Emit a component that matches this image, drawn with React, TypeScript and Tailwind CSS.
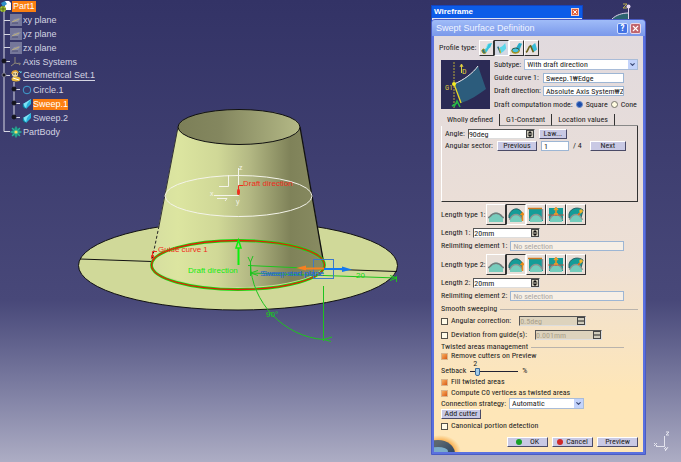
import { useState } from 'react';
import type { ReactNode } from 'react';
import { ChevronDown, X } from 'lucide-react';

const bevel =
  'border border-t-white border-l-white border-r-[#4a4a66] border-b-[#4a4a66]';

/* ---------- specification tree ---------- */

const PlaneIcon = () => (
  <svg viewBox="0 0 12 12" className="w-3 h-3">
    <rect width="12" height="12" fill="#75779a" />
    <path d="M1 9 L4 5 L11 4 L8 8 Z" fill="#8d8fa6" />
    <path d="M2 8 L9 5" stroke="#b9ab7c" />
    <path d="M2 9 L8 9" stroke="#4c4f74" />
  </svg>
);

const AxisIcon = () => (
  <svg viewBox="0 0 12 12" className="w-3 h-3" fill="none">
    <path d="M5 1 V7 L1 10 M5 7 L10 8 M9 6.500 L10.500 8 L9 9" stroke="#8f8878" />
  </svg>
);

const GeoSetIcon = () => (
  <svg viewBox="0 0 12 12" className="w-3 h-3">
    <circle cx="5" cy="4" r="3" fill="#f1d9a0" />
    <path d="M2 4 C2 0 8 0 8 3" fill="none" stroke="#e0a030" strokeWidth="1.500" />
    <ellipse cx="6" cy="9" rx="4.500" ry="2.500" fill="#e8b83c" />
    <path d="M3 8 L9 10" stroke="#fff" />
    <path d="M9 1 L11 3 M11 1 V3" stroke="#58c8d8" />
    <circle cx="4" cy="4" r="0.700" fill="#222" />
    <circle cx="6.500" cy="4" r="0.700" fill="#222" />
  </svg>
);

const CircleIcon = () => (
  <svg viewBox="0 0 10 10" className="w-[10px] h-[10px]">
    <circle cx="5" cy="5" r="3.800" fill="none" stroke="#3fa0d0" />
  </svg>
);

const SweepIcon = () => (
  <svg viewBox="0 0 10 10" className="w-[10px] h-[10px]">
    <path d="M1 5 L6 2 L9 0 L9 5 L4 10 L1 8 Z" fill="#28b4dc" />
    <path d="M1 5 L6 2 L9 0 L5 5 L4 9" fill="#7fe4f4" />
    <path d="M1 5 V8 L4 10" fill="none" stroke="#10607c" />
  </svg>
);

const BodyIcon = () => (
  <svg viewBox="0 0 12 12" className="w-3 h-3">
    <circle cx="6" cy="6" r="4.500" fill="#1a7c70" />
    <path
      d="M6 0.500 V11.500 M0.500 6 H11.500 M2 2 L10 10 M10 2 L2 10"
      stroke="#2cb09c"
      strokeWidth="1.300"
    />
    <circle cx="6" cy="6" r="1.600" fill="#f0e060" />
  </svg>
);

const PartIcon = () => (
  <svg viewBox="0 0 12 12" className="w-3 h-3">
    <path d="M5 0 H9 L11 2 V9 H5 Z" fill="#fff" />
    <path d="M1 2 L5 0 L7 3 L3 6 Z" fill="#2f90c8" />
    <circle cx="3" cy="8" r="3" fill="#a8c838" />
    <path d="M3 5 V11 M0 8 H6" stroke="#556b10" />
  </svg>
);

interface TreeNode {
  label: string;
  icon: ReactNode;
  level: number;
  selected?: boolean;
  active?: boolean;
}

const treeNodes: TreeNode[] = [
  { label: 'xy plane', icon: <PlaneIcon />, level: 1 },
  { label: 'yz plane', icon: <PlaneIcon />, level: 1 },
  { label: 'zx plane', icon: <PlaneIcon />, level: 1 },
  { label: 'Axis Systems', icon: <AxisIcon />, level: 1 },
  { label: 'Geometrical Set.1', icon: <GeoSetIcon />, level: 1, active: true },
  { label: 'Circle.1', icon: <CircleIcon />, level: 2 },
  { label: 'Sweep.1', icon: <SweepIcon />, level: 2, selected: true },
  { label: 'Sweep.2', icon: <SweepIcon />, level: 2 },
  { label: 'PartBody', icon: <BodyIcon />, level: 1 },
];

const SpecTree = () => (
  <nav className="relative w-max text-[9px] leading-none text-[#d4d4e2] font-['Liberation_Sans',sans-serif]">
    <svg
      width="24"
      height="140"
      className="absolute left-0 top-0"
      fill="none"
      stroke="#d8d8e4"
    >
      <path d="M4 10 V131.500 M4 20.500 H10 M4 34.500 H10 M4 47.500 H10 M4 61.500 H10 M4 75.500 H10 M4 131.500 H10" />
      <path d="M14 82 V117 M14 89.500 H20 M14 103.500 H20 M14 117.500 H20" />
      <g fill="#14141c" stroke="#14141c">
        <circle cx="4" cy="61" r="2" />
        <circle cx="4" cy="75" r="2" stroke="#77778c" />
        <circle cx="14" cy="89" r="2" />
        <circle cx="14" cy="103" r="2" />
        <circle cx="14" cy="117" r="2" />
      </g>
    </svg>
    <div className="relative flex items-center h-[13px]">
      <PartIcon />
      <span className="bg-[#fb7f12] text-white px-px py-px">Part1</span>
    </div>
    <ul className="relative">
      {treeNodes.map((node) => (
        <li
          key={node.label}
          className={`flex items-center gap-px h-[14px] ${node.level === 2 ? 'pl-[22px]' : 'pl-[10px]'}`}
        >
          {node.icon}
          <span
            className={
              node.selected
                ? 'bg-[#fb7f12] text-white py-px'
                : node.active
                  ? 'border-b border-[#d4d4e2]'
                  : ''
            }
          >
            {node.label}
          </span>
        </li>
      ))}
    </ul>
  </nav>
);

/* ---------- 3D view ---------- */

const Scene = () => (
  <svg
    width="420"
    height="360"
    viewBox="0 0 420 360"
    fill="none"
    className="absolute left-0 top-0 font-['Liberation_Sans',sans-serif] text-[8px]"
  >
    <defs>
      <linearGradient id="cone" x1="152" x2="325" y1="0" y2="0" gradientUnits="userSpaceOnUse">
        <stop offset="0" stopColor="#d6dea0" />
        <stop offset="0.150" stopColor="#dce5a0" />
        <stop offset="0.380" stopColor="#d0d897" />
        <stop offset="0.560" stopColor="#b4b984" />
        <stop offset="0.800" stopColor="#7f8259" />
        <stop offset="1" stopColor="#898c62" />
      </linearGradient>
      <linearGradient id="inside" x1="178" x2="300" y1="0" y2="0" gradientUnits="userSpaceOnUse">
        <stop offset="0" stopColor="#7c7f58" />
        <stop offset="0.350" stopColor="#84875f" />
        <stop offset="1" stopColor="#b4b986" />
      </linearGradient>
    </defs>

    <ellipse cx="238" cy="265.500" rx="159.500" ry="44.500" fill="#d0d999" stroke="#111" />
    <path d="M80 259 L152 261.500 M324 269 L397 271.500" stroke="#111" />

    <path d="M178 127 L152 260 A86.500 24.500 0 0 0 324.500 265 L300 127 Z" fill="url(#cone)" />
    <path d="M178 127 L159 226" stroke="#333" />
    <path d="M159 226 L152 260" stroke="#222" strokeDasharray="3 2" />
    <path d="M300 127 L324 265" stroke="#111" strokeWidth="1.300" />
    <ellipse cx="239" cy="127" rx="61" ry="17.500" fill="url(#inside)" stroke="#111" />

    <ellipse cx="238.500" cy="196" rx="73.500" ry="20.500" stroke="#f4f4ea" />
    <path
      d="M238.500 168 V195.500 H214 M219 186.500 H228.500 V175 M217 198.500 H227 L225 201"
      stroke="#f4f4ea"
    />
    <g fill="#f4f4ea" fontSize="7">
      <text x="239" y="170">z</text>
      <text x="210" y="196">x</text>
      <text x="236" y="204">y</text>
    </g>

    <ellipse cx="238" cy="265" rx="86.500" ry="24.500" stroke="#10e010" strokeWidth="2.800" />
    <ellipse cx="238" cy="265" rx="86.500" ry="24.500" stroke="#e02008" strokeWidth="1.300" />

    <g stroke="#f02c1c">
      <path d="M238.500 195 V185.500 H243" />
      <ellipse cx="238.500" cy="192" rx="1" ry="3" />
      <path d="M152.500 257 V251.500 H157" />
      <ellipse cx="152.500" cy="257" rx="1" ry="2.500" />
    </g>
    <g fill="#f02c1c">
      <text x="243" y="186">Draft direction</text>
      <text x="158" y="252">Guide curve 1</text>
    </g>

    {/* draft direction arrow */}
    <path d="M238.500 265 V248" stroke="#0cf00c" strokeWidth="2" />
    <path d="M238.500 240 L241 248 H236 Z" stroke="#0cf00c" strokeWidth="1.500" />
    <text x="188" y="273" fill="#10ec10">Draft direction</text>

    {/* length and angle dimensions */}
    <g stroke="#1ec41e">
      <path d="M248 265.500 L326 269 M250 273 L397 278 M396.500 276 V282" />
      <path d="M250.500 263 C251 302 284 337 324 339.500" />
      <path d="M323.500 286 V341" />
      <path d="M248 257 L250.500 262 L253 256 M250.500 262 V276" />
      <path d="M258 270.500 L250.500 273 L258 275.500 M390 275.500 L397 278 L390 280.500" />
      <path d="M332 337 L324 339.500 L331 341.500" />
    </g>
    <g fill="#10d810">
      <text x="266" y="317">90°</text>
      <text x="356" y="278">20</text>
    </g>

    {/* sweep limits */}
    <rect x="313.500" y="259.500" width="20" height="19" stroke="#3c78c8" />
    <path d="M324 269 H342" stroke="#1478f0" strokeWidth="2" />
    <path d="M342 266.500 L352 269.500 L342 272 Z" fill="#1478f0" />
    <path d="M324 268.500 H306" stroke="#f88020" strokeWidth="2" />
    <path d="M306 265.500 L296 268 L306 270.500 Z" fill="#f88020" />
    <g fill="#2c6cc8">
      <text x="260" y="276">Sweep start plane</text>
      <text x="262" y="276">Sweep end plane</text>
    </g>
  </svg>
);

const Compass = () => (
  <svg width="24" height="20" viewBox="0 0 24 20" fill="none" className="absolute right-[47px] top-0">
    <path d="M2 19 C6 15 12 13 18.500 13 V19 Z" fill="#2c6470" />
    <path d="M2 19 C6 15 12 13 18.500 13 M18.500 6 V19" stroke="#e0d4ec" />
    <circle cx="18.500" cy="6.500" r="2" fill="#e8d8f4" />
    <path d="M13 4 H17 L13 8 H17" stroke="#b8ac50" />
  </svg>
);

const AxisTriad = () => (
  <svg width="20" height="22" viewBox="0 0 20 22" fill="none" className="absolute right-[9px] bottom-[10px]">
    <path d="M12.500 6 V16.500 H4 M12.500 16.500 L15 19" stroke="#e4e4ee" />
    <path d="M14 2 H17 L14 5 H17 M2 13 L5 16 M5 13 L2 16 M12 18 L14 20 L16 17 M14 20 L13 21" stroke="#e4e4ee" />
  </svg>
);

/* ---------- dialog controls ---------- */

interface ButtonProps {
  children: ReactNode;
  className?: string;
}

const PushButton = ({ children, className = '' }: ButtonProps) => (
  <button
    type="button"
    className={`flex items-center justify-center h-[10px] bg-[#c9c9e4] ${bevel} ${className}`}
  >
    {children}
  </button>
);

interface FieldProps {
  id: string;
  label: string;
  value: string;
  disabled?: boolean;
}

const SpinBox = ({ id, value, disabled }: Omit<FieldProps, 'label'>) => (
  <span
    className={`flex w-[67px] h-[10px] border border-t-[#555] border-l-[#555] border-r-[#ddd] border-b-[#ddd] ${disabled ? 'bg-[#ddd3bd]' : 'bg-white'}`}
  >
    <input
      id={id}
      defaultValue={value}
      disabled={disabled}
      className="flex-1 min-w-0 h-full disabled:text-[#a9a08c]"
    />
    <button
      type="button"
      aria-label="Step"
      disabled={disabled}
      className="flex items-center justify-center w-2 h-full bg-[#d0ccbc] border border-[#444]"
    >
      <svg viewBox="0 0 6 6" className="w-[6px] h-[6px]">
        {disabled ? (
          <path d="M0 3 H6" stroke="#222" />
        ) : (
          <path d="M3 0 L5.500 2.500 H0.500 Z M3 6 L5.500 3.500 H0.500 Z" fill="#111" />
        )}
      </svg>
    </button>
  </span>
);

const SpinField = ({ id, label, value }: FieldProps) => (
  <div className="flex items-center gap-[3px]">
    <label htmlFor={id}>{label}</label>
    <SpinBox id={id} value={value} />
  </div>
);

interface TextFieldProps extends FieldProps {
  muted?: boolean;
  labelClass?: string;
}

const TextField = ({ id, label, value, muted, labelClass = '' }: TextFieldProps) => (
  <div className="flex items-center gap-[3px]">
    <label htmlFor={id} className={labelClass}>
      {label}
    </label>
    <input
      id={id}
      defaultValue={value}
      className={`flex-1 min-w-0 h-[10px] pl-0.5 border border-[#9db6d4] ${muted ? 'bg-[#f6efe6] text-[#aaa6a2]' : 'bg-white'}`}
    />
  </div>
);

const SelectField = ({ id, label, value }: FieldProps) => (
  <div className="flex items-center gap-[3px]">
    <label htmlFor={id}>{label}</label>
    <span className="relative flex-1 min-w-0">
      <select
        id={id}
        className="block appearance-none w-full h-[11px] pl-0.5 bg-white border border-[#a9bcd8]"
      >
        <option>{value}</option>
      </select>
      <ChevronDown
        strokeWidth={4}
        className="absolute right-px top-px w-[9px] h-[9px] p-px bg-[#c3d3fb] text-[#3c4c78] pointer-events-none"
      />
    </span>
  </div>
);

const CheckField = ({ label, checked }: { label: string; checked?: boolean }) => (
  <label className="flex items-center gap-[3px]">
    <input
      type="checkbox"
      defaultChecked={checked}
      className="appearance-none w-[7px] h-[7px] bg-[#fffbe8] border border-[#55524a] checked:border-[#d9b48c] checked:bg-linear-to-br checked:from-[#f8b060] checked:to-[#d85808]"
    />
    {label}
  </label>
);

const GroupTitle = ({ children }: { children: string }) => (
  <div className="flex items-center gap-[3px]">
    {children}
    <hr className="flex-1 border-[#b9b3ac]" />
  </div>
);

/* ---------- dialog icons ---------- */

const profileIcons = [
  {
    name: 'Explicit',
    art: (
      <>
        <path d="M5 8 C8 7 7 3 9 2 L13 1 L11 6 C9 7 9 9 6 12 Z" fill="#38c4dc" />
        <path d="M5 8 C8 7 7 3 9 2" fill="none" stroke="#8cecf4" />
        <path d="M2 9 C3 7 5 7 5 9 C5 11 7 11 6 12 C4 13 2 12 2 9 Z" fill="#2c7480" stroke="#a89820" />
      </>
    ),
  },
  {
    name: 'Line',
    art: (
      <>
        <path d="M5 6 C8 5 9 3 11 1 L12 7 C10 9 9 11 6 12 Z" fill="#5cd8ec" />
        <path d="M3 5 L6 12" stroke="#2a7480" strokeWidth="1.500" />
        <path d="M5 7 L6 12" stroke="#d8c020" />
      </>
    ),
  },
  {
    name: 'Circle',
    art: (
      <>
        <path d="M5 7 C8 6 8 2 10 1 L13 2 C11 6 11 9 8 11 Z" fill="#28acc8" />
        <ellipse cx="6" cy="9" rx="4" ry="2.500" fill="#48c4dc" stroke="#285040" />
        <path d="M2 9 C2 13 9 13 10 9" fill="none" stroke="#b09c20" strokeWidth="1.300" />
      </>
    ),
  },
  {
    name: 'Conic',
    art: (
      <>
        <path d="M5 4 C8 5 8 3 11 1 L13 8 L9 11 Z" fill="#38bcd8" />
        <path d="M1 11 C4 10 3 5 6 4 L9 11" fill="none" stroke="#6c6418" strokeWidth="1.800" />
      </>
    ),
  },
];

const frontDome = (
  <>
    <path d="M2 15 V12 C5 6 11 6 14 12 V15 Z" fill="#74ccbc" />
    <path d="M1 12.500 L2 12 C5 6 11 6 14 12 L15 12.500" fill="none" stroke="#8c9490" strokeWidth="1.300" />
  </>
);

const lengthIcons = [
  {
    name: 'Standard',
    art: (
      <>
        <path d="M1 15 V10 C5 4 11 4 15 10 V15 Z" fill="#78ccbc" />
        <path d="M0 11 L2 9.500 C5 5 11 5 14 9.500 L16 11" fill="none" stroke="#747c7c" strokeWidth="1.500" />
      </>
    ),
  },
  {
    name: 'From curve',
    art: (
      <>
        <path d="M1 11 V8 C4 0 12 0 14.500 7 V11 Z" fill="#149c98" stroke="#2c6064" />
        {frontDome}
        <path d="M14.500 14 V7 M12.500 8 L14.500 6 L16 8" stroke="#e88818" strokeWidth="1.500" fill="none" />
      </>
    ),
  },
  {
    name: 'From / up to',
    art: (
      <>
        <path d="M1 2 H15 V14 H1 Z" fill="#149c98" />
        {frontDome}
        <path d="M0 1.500 H14" stroke="#d07820" strokeWidth="1.500" />
        <path d="M14.500 2 V12" stroke="#909098" strokeWidth="1.500" />
      </>
    ),
  },
  {
    name: 'From extremum',
    art: (
      <>
        <path d="M1 1 H15 V14 H1 Z" fill="#149c98" />
        {frontDome}
        <path d="M0 8 H16 M8 0 V9" stroke="#d84830" strokeWidth="0.800" />
        <path d="M8 7 V2 M6 3 L8 1 L10 3 M6 7 H10" stroke="#f0a020" strokeWidth="1.300" fill="none" />
      </>
    ),
  },
  {
    name: 'Along surface',
    art: (
      <>
        <path d="M1 11 V7 C3 0 11 0 15 3 L13 11 Z" fill="#149c98" stroke="#2c6064" />
        {frontDome}
        <path d="M10 8 L14 4" stroke="#f0a020" strokeWidth="1.500" />
        <circle cx="13" cy="4" r="1.800" fill="#f0b830" />
        <circle cx="11" cy="7" r="1" fill="#d86020" />
      </>
    ),
  },
];

const LengthTypes = ({ label }: { label: string }) => (
  <div className="flex items-center gap-[3px]">
    <span className="w-[42px] whitespace-nowrap">{label}</span>
    <div className="flex">
      {lengthIcons.map((icon, i) => (
        <button
          key={icon.name}
          type="button"
          aria-label={icon.name}
          className={`flex items-center justify-center w-5 h-[21px] border bg-[#e8dfd8] ${
            i === 1
              ? 'border-t-[#333] border-l-[#333] border-r-white border-b-white'
              : 'border-t-white border-l-white border-r-[#333] border-b-[#333]'
          }`}
        >
          <svg viewBox="0 0 16 16" className="w-4 h-4">
            {icon.art}
          </svg>
        </button>
      ))}
    </div>
  </div>
);

const DraftPreview = () => (
  <svg viewBox="0 0 49 49" className="w-[49px] h-[49px] shrink-0 bg-[#2b2a55]">
    <path d="M13 24 C23 20 32 13 37 6 L45 29 C37 35 29 40 20 43 Z" fill="#2c5c7c" />
    <path d="M13 24 C23 20 32 13 37 6" fill="none" stroke="#eee" />
    <path d="M13 2 V48" stroke="#b8a838" strokeDasharray="2 1" />
    <path d="M13 24 L20 43" stroke="#e8d828" strokeWidth="1.300" />
    <circle cx="13" cy="24" r="2" fill="#f4ec20" />
    <path d="M20.500 13 V5 M19 7 L20.500 4 L22 7" stroke="#e0d040" fill="none" />
    <path d="M13 47 L16 41 L19 47 M11 46 L16 43" stroke="#28b848" strokeWidth="1.500" fill="none" />
    <text x="21" y="14" fill="#e0d040" fontSize="8">D</text>
    <text x="4" y="30" fill="#e0d040" fontSize="7">G1</text>
  </svg>
);

/* ---------- dialog ---------- */

const tabs = ['Wholly defined', 'G1-Constant', 'Location values'];

const SweepDialog = () => {
  const [tab, setTab] = useState(0);

  return (
    <section className="absolute right-[35px] top-[19px] w-[215px] rounded-t-[4px] bg-[#5b71df] border border-[#4a5cc4] px-0.5 pb-0.5">
      <header className="flex items-center gap-0.5 h-4 -mx-0.5 px-1 rounded-t-[3px] bg-linear-to-b from-[#a0bcf8] to-[#7a98ea] text-[9px] font-bold text-[#f0f4ff]">
        <h1 className="flex-1 font-['Liberation_Sans',sans-serif] font-normal">
          Swept Surface Definition
        </h1>
        <button
          type="button"
          className="flex items-center justify-center w-[11px] h-[11px] rounded-[2px] border border-[#d4e0ff] bg-[#4272e4] text-white"
        >
          ?
        </button>
        <button
          type="button"
          aria-label="Close"
          className="flex items-center justify-center w-[11px] h-[11px] rounded-[2px] border border-[#e8d8e8] bg-[#c0646c] text-white"
        >
          <X strokeWidth={3} className="w-[9px] h-[9px]" />
        </button>
      </header>

      <div className="relative flex flex-col pt-1 pb-[5px] px-[5px] bg-linear-to-b from-[#e1dade] via-[#eee0d4] via-55% to-[#fee6b8] to-85%">
        <div className="flex items-center gap-[3px]">
          <span>Profile type:</span>
          <div className="flex">
            {profileIcons.map((icon, i) => (
              <button
                key={icon.name}
                type="button"
                aria-label={icon.name}
                className={`flex items-center justify-center w-[15px] h-4 border ${
                  i === 1
                    ? 'bg-[#d4d8e4] border-t-[#333] border-l-[#333] border-r-white border-b-white'
                    : 'bg-[#e8e0e0] border-t-white border-l-white border-r-[#333] border-b-[#333]'
                }`}
              >
                <svg viewBox="0 0 14 14" className="w-[13px] h-[13px]">
                  {icon.art}
                </svg>
              </button>
            ))}
          </div>
        </div>

        <div className="flex items-center gap-1 mt-[3px] pl-0.5">
          <DraftPreview />
          <div className="flex-1 min-w-0 flex flex-col justify-between h-[51px]">
            <SelectField id="subtype" label="Subtype:" value="With draft direction" />
            <div className="flex flex-col gap-[3px] pr-[14px]">
              <TextField
                id="guide"
                label="Guide curve 1:"
                value="Sweep.1₩Edge"
                labelClass="w-[46px] whitespace-nowrap"
              />
              <TextField
                id="draft"
                label="Draft direction:"
                value="Absolute Axis System₩Z"
                labelClass="w-[46px] whitespace-nowrap"
              />
            </div>
            <div className="flex items-center gap-[3px] h-[11px]">
              <span>Draft computation mode:</span>
              {['Square', 'Cone'].map((mode) => (
                <label key={mode} className="flex items-center gap-[3px]">
                  <input
                    type="radio"
                    name="mode"
                    defaultChecked={mode === 'Square'}
                    className="appearance-none w-[7px] h-[7px] rounded-full border border-[#77746c] bg-[#fffbe0] checked:bg-[#1c4ca8] checked:border-[#6c8ccc]"
                  />
                  {mode}
                </label>
              ))}
            </div>
          </div>
        </div>

        <div role="tablist" className="flex mt-1 pl-0.5 h-3">
          {tabs.map((name, i) => (
            <button
              key={name}
              type="button"
              role="tab"
              aria-selected={tab === i}
              onClick={() => setTab(i)}
              className={`px-[6px] border-r border-r-[#333] ${tab === i ? '' : 'border-b border-b-[#888]'}`}
            >
              {name}
            </button>
          ))}
          <span className="flex-1 border-b border-[#888]" />
        </div>
        <div
          role="tabpanel"
          className="flex flex-col gap-0.5 ml-0.5 h-[76px] pt-[3px] pl-[3px] border-l border-b border-r border-l-white border-b-[#333] border-r-[#333]"
        >
          <div className="flex items-center gap-1">
            <SpinField id="angle" label="Angle:" value="90deg" />
            <PushButton className="w-7">Law...</PushButton>
          </div>
          <div className="flex items-center gap-1">
            <label htmlFor="sector">Angular sector:</label>
            <PushButton className="w-10">Previous</PushButton>
            <input
              id="sector"
              defaultValue="1"
              className="w-7 h-[10px] pl-0.5 bg-white border border-[#9db6d4]"
            />
            <span>/ 4</span>
            <PushButton className="w-9 ml-1">Next</PushButton>
          </div>
        </div>

        {[1, 2].map((n) => (
          <div key={n} className="flex flex-col gap-[3px] pl-0.5 pr-[14px] pt-0.5 pb-px">
            <LengthTypes label={`Length type ${n}:`} />
            <SpinField id={`length${n}`} label={`Length ${n}:`} value="20mm" />
            <TextField id={`relimit${n}`} label={`Relimiting element ${n}:`} value="No selection" muted />
          </div>
        ))}

        <div className="flex flex-col pl-0.5 pt-[3px]">
          <GroupTitle>Smooth sweeping</GroupTitle>
          <div className="flex items-center gap-2 mt-[3px]">
            <CheckField label="Angular correction:" />
            <SpinBox id="correction" value="0.5deg" disabled />
          </div>
          <div className="flex items-center gap-2 mt-1">
            <CheckField label="Deviation from guide(s):" />
            <SpinBox id="deviation" value="0.001mm" disabled />
          </div>

          <div className="mt-[3px] pr-[14px]">
            <GroupTitle>Twisted areas management</GroupTitle>
          </div>
          <div className="mt-px">
            <CheckField label="Remove cutters on Preview" checked />
          </div>
          <div className="flex items-end gap-1 h-[15px]">
            <label htmlFor="setback">Setback</label>
            <span className="flex flex-col w-12">
              <output className="pl-[3px]">2</output>
              <input
                id="setback"
                type="range"
                min={0}
                max={20}
                defaultValue={2}
                className="appearance-none w-full h-[7px] bg-[linear-gradient(#223,#223)] bg-[length:100%_1px] bg-center bg-no-repeat [&::-webkit-slider-thumb]:appearance-none [&::-webkit-slider-thumb]:w-[5px] [&::-webkit-slider-thumb]:h-2 [&::-webkit-slider-thumb]:rounded-b-[2px] [&::-webkit-slider-thumb]:border [&::-webkit-slider-thumb]:border-[#3c6c9c] [&::-webkit-slider-thumb]:bg-[#a4cce8]"
              />
            </span>
            <span>%</span>
          </div>
          <div className="flex flex-col gap-[3px] mt-[3px]">
            <CheckField label="Fill twisted areas" checked />
            <CheckField label="Compute C0 vertices as twisted areas" checked />
          </div>
          <div className="mt-px w-[143px]">
            <SelectField id="strategy" label="Connection strategy:" value="Automatic" />
          </div>
          <PushButton className="w-10">Add cutter</PushButton>
          <div className="mt-[3px]">
            <CheckField label="Canonical portion detection" />
          </div>
        </div>

        <svg viewBox="0 0 28 18" className="absolute left-0 bottom-0 w-7 h-[18px]">
          <defs>
            <radialGradient id="glow">
              <stop offset="0.600" stopColor="#f8a038" />
              <stop offset="1" stopColor="#f8b048" stopOpacity="0" />
            </radialGradient>
            <linearGradient id="planet" x1="0" y1="0" x2="1" y2="1">
              <stop offset="0.300" stopColor="#5c6870" />
              <stop offset="1" stopColor="#0c2c58" />
            </linearGradient>
          </defs>
          <ellipse cx="6" cy="18" rx="21" ry="17" fill="url(#glow)" />
          <ellipse cx="4" cy="20" rx="17" ry="14" fill="url(#planet)" />
          <ellipse cx="4" cy="17" rx="10" ry="4" fill="#7cacc8" />
        </svg>

        <footer className="relative flex justify-end gap-1 mt-[7px]">
          <PushButton className="w-[41px] gap-2">
            <i className="w-[6px] h-[6px] rounded-full bg-[#18a028]" />
            OK
          </PushButton>
          <PushButton className="w-[41px] gap-[3px]">
            <i className="w-[6px] h-[6px] rounded-full bg-[#d02828]" />
            Cancel
          </PushButton>
          <PushButton className="w-[41px]">Preview</PushButton>
        </footer>
      </div>
    </section>
  );
};

const WireframeToolbar = () => (
  <section className="absolute right-[98px] top-[5px] w-[152px] h-5 bg-[#0c5ce8] border border-[#1444c0]">
    <header className="flex items-center justify-between h-3 pl-0.5 pr-[3px] text-[8px] font-bold text-white font-['Liberation_Sans',sans-serif]">
      <h2>Wireframe</h2>
      <button
        type="button"
        aria-label="Close toolbar"
        className="flex items-center justify-center w-2 h-2 bg-[#e0603c] border border-[#f4d0c4]"
      >
        <X strokeWidth={4} className="w-[6px] h-[6px]" />
      </button>
    </header>
    <div className="h-[6px] bg-[#dfe4f4]" />
  </section>
);

const App = () => (
  <main className="relative min-h-screen overflow-hidden bg-linear-to-b from-[#333366] via-[#484879] via-65% to-[#adadc4] text-[8px] leading-none text-[#222] font-['Roboto_Condensed','Liberation_Sans',sans-serif]">
    <Scene />
    <SpecTree />
    <Compass />
    <AxisTriad />
    <WireframeToolbar />
    <SweepDialog />
  </main>
);

export default App;
